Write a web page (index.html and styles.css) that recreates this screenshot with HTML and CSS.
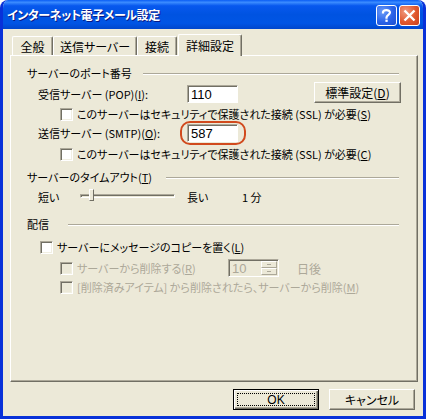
FILE: index.html
```html
<!DOCTYPE html>
<html lang="ja">
<head>
<meta charset="utf-8">
<title>インターネット電子メール設定</title>
<link rel="stylesheet" href="styles.css">
</head>
<body>
<div class="window">
  <div class="titlebar">
    <div class="title">インターネット電子メール設定</div>
    <div class="tbtns">
      <div class="tbtn help">
        <svg width="21" height="21" viewBox="0 0 21 21"><path d="M7 7.5 C7 4.5 14 4.2 14 7.6 C14 9.8 10.5 10 10.5 12.6" fill="none" stroke="#fff" stroke-width="2.2" stroke-linecap="square"/><rect x="9.4" y="14.6" width="2.3" height="2.3" fill="#fff"/></svg>
      </div>
      <div class="tbtn close">
        <svg width="21" height="21" viewBox="0 0 21 21"><path d="M5.5 5.5 L15.5 15.5 M15.5 5.5 L5.5 15.5" stroke="#fff" stroke-width="2.4"/></svg>
      </div>
    </div>
  </div>
  <div class="client">
    <div class="tabs">
      <div class="tab t1">全般</div>
      <div class="tab t2">送信サーバー</div>
      <div class="tab t3">接続</div>
      <div class="tab sel">詳細設定</div>
    </div>
    <div class="panel">
      <div class="ghead g1"><span class="gt">サーバーのポート番号</span><i class="etch"></i></div>
      <div class="row field r-pop">
        <span class="lbl">受信サーバー (POP)(<u>I</u>):</span>
        <span class="inp">110</span>
        <span class="btn std">標準設定(<u>D</u>)</span>
      </div>
      <div class="row chk r-c1"><span class="box"></span><span>このサーバーはセキュリティで保護された接続 (SSL) が必要(<u>S</u>)</span></div>
      <div class="row field r-smtp">
        <span class="lbl">送信サーバー (SMTP)(<u>O</u>):</span>
        <span class="inpwrap"><span class="inp">587</span><span class="mark"></span></span>
      </div>
      <div class="row chk r-c2"><span class="box"></span><span>このサーバーはセキュリティで保護された接続 (SSL) が必要(<u>C</u>)</span></div>

      <div class="ghead g2"><span class="gt">サーバーのタイムアウト(<u>T</u>)</span><i class="etch"></i></div>
      <div class="row slider">
        <span class="s-lbl">短い</span>
        <span class="track"><span class="thumb"></span></span>
        <span class="s-long">長い</span>
        <span class="s-val">1 分</span>
      </div>

      <div class="ghead g3"><span class="gt">配信</span><i class="etch"></i></div>
      <div class="row chk r-c3"><span class="box"></span><span>サーバーにメッセージのコピーを置く(<u>L</u>)</span></div>
      <div class="row chk dis r-c4">
        <span class="box"></span><span class="c4l">サーバーから削除する(<u>R</u>)</span>
        <span class="spin"><span class="spinv">10</span><span class="spinb"><i></i><i></i></span></span>
        <span class="days">日後</span>
      </div>
      <div class="row chk dis r-c5"><span class="box"></span><span>[削除済みアイテム] から削除されたら、サーバーから削除(<u>M</u>)</span></div>
    </div>
    <div class="actions">
      <span class="btn dlg def"><span class="focus">OK</span></span>
      <span class="btn dlg">キャンセル</span>
    </div>
  </div>
</div>
</body>
</html>
```

FILE: styles.css
```css
* { box-sizing: border-box; }
html, body { margin: 0; padding: 0; background: #fff; }
body {
  font-family: "Noto Sans CJK JP", "Noto Sans", sans-serif;
  font-size: 11px;
  color: #000;
  font-feature-settings: "palt";
}
u { text-decoration: underline; text-underline-offset: 1px; }

.window {
  width: 426px;
  height: 419px;
  background: #ECE9D8;
  border-radius: 8px 8px 0 0;
  overflow: hidden;
  display: flex;
  flex-direction: column;
  border-left: 3px solid #0831D9;
  border-right: 3px solid #0831D9;
  border-bottom: 3px solid #0831D9;
}

.titlebar {
  height: 29px;
  margin: 0 -3px;
  padding: 0 6px 0 7px;
  display: flex;
  align-items: center;
  justify-content: space-between;
  background: linear-gradient(to bottom, #0A5DF4 0%, #3B8CFF 8%, #0758EE 20%, #0053E1 50%, #0055E5 80%, #0046CC 100%);
  flex-shrink: 0;
}
.title {
  color: #fff;
  font-weight: bold;
  font-size: 12px;
  letter-spacing: -0.4px;
  text-shadow: 1px 1px 0 #0A1883;
  white-space: nowrap;
  font-feature-settings: "palt";
}
.tbtns { display: flex; gap: 2px; margin-top: 1px; }
.tbtn {
  width: 21px;
  height: 21px;
  border: 1px solid #fff;
  border-radius: 3px;
  display: flex;
  align-items: center;
  justify-content: center;
}
.tbtn svg { margin: -1px; }
.help { background: radial-gradient(circle at 30% 30%, #6C9CF8 0%, #2A63E8 55%, #1D4FD0 100%); }
.close { background: radial-gradient(circle at 30% 30%, #F09A80 0%, #E0582E 55%, #C8401C 100%); }

.client {
  flex: 1;
  display: flex;
  flex-direction: column;
  padding: 5px 5px 0 7px;
}

.tabs {
  display: flex;
  align-items: flex-end;
  height: 21px;
  padding-left: 2px;
  position: relative;
  z-index: 1;
  font-size: 12px;
}
.tab {
  height: 19px;
  border-top: 1px solid #fff;
  border-left: 1px solid #fff;
  border-right: 1px solid #716F64;
  box-shadow: inset -1px 0 0 #ACA899;
  border-radius: 2px 2px 0 0;
  display: flex;
  align-items: center;
  justify-content: center;
  padding-top: 1px;
}
.t1 { width: 41px; }
.t2 { width: 84px; }
.t3 { width: 40px; }
.tab.sel {
  width: 64px;
  height: 22px;
  margin-left: 1px;
  margin-bottom: -1px;
  background: #ECE9D8;
  padding-bottom: 1px;
}

.panel {
  height: 327px;
  border-top: 1px solid #fff;
  border-left: 1px solid #fff;
  border-right: 1px solid #716F64;
  border-bottom: 1px solid #716F64;
  box-shadow: inset -1px -1px 0 #ACA899;
  padding: 10px 18px 0 16px;
  display: flex;
  flex-direction: column;
}

.ghead {
  height: 14px;
  display: flex;
  align-items: center;
  white-space: nowrap;
}
.g1 .gt { width: 116px; }
.g2 .gt { width: 139px; }
.g3 .gt { width: 41px; }
.etch {
  flex: 1;
  height: 2px;
  border-top: 1px solid #ACA899;
  border-bottom: 1px solid #fff;
  margin-top: 1px;
}
.g2 { margin-top: 9px; }
.g3 { margin-top: 12px; }

.row { display: flex; align-items: center; white-space: nowrap; }
.field { height: 18px; padding-left: 11px; }
.lbl { width: 149px; }
.r-pop { margin-top: 5px; }
.r-smtp { margin-top: 3px; }

.inp {
  width: 51px;
  height: 18px;
  background: #fff;
  border-top: 1px solid #ACA899;
  border-left: 1px solid #ACA899;
  border-right: 1px solid #fff;
  border-bottom: 1px solid #fff;
  box-shadow: inset 1px 1px 0 #716F64;
  padding: 0 3px;
  display: flex;
  align-items: center;
  line-height: 1;
  font-family: "Liberation Sans", sans-serif;
  font-size: 13px;
}
.inpwrap { position: relative; display: flex; }
.mark {
  position: absolute;
  left: -7px;
  top: -3px;
  width: 66px;
  height: 24px;
  border: 2px solid #D14A1E;
  border-radius: 10px;
}

.btn {
  display: flex;
  align-items: center;
  justify-content: center;
  background: #ECE9D8;
  border-top: 1px solid #fff;
  border-left: 1px solid #fff;
  border-right: 1px solid #716F64;
  border-bottom: 1px solid #716F64;
  box-shadow: inset -1px -1px 0 #ACA899;
}
.std {
  margin-left: auto;
  margin-right: -2px;
  width: 87px;
  height: 21px;
  margin-top: -3px;
  font-size: 12px;
}

.chk { height: 14px; padding-left: 33px; }
.box {
  width: 13px;
  height: 13px;
  flex-shrink: 0;
  margin-right: 4px;
  background: #fff;
  border-top: 1px solid #ACA899;
  border-left: 1px solid #ACA899;
  border-right: 1px solid #fff;
  border-bottom: 1px solid #fff;
  box-shadow: inset 1px 1px 0 #716F64, inset -1px -1px 0 #F1EFE2;
}
.r-c1 { margin-top: 4px; }
.r-c2 { margin-top: 5px; }
.r-c3 { margin-top: 9px; padding-left: 13px; }
.r-c4 { margin-top: 5px; height: 18px; }
.r-c5 { margin-top: 3px; }
.dis { color: #ACA899; }
.dis .box { background: #ECE9D8; }

.c4l { width: 151px; }
.spin {
  width: 51px;
  height: 18px;
  display: flex;
  align-items: center;
  justify-content: space-between;
  border-top: 1px solid #ACA899;
  border-left: 1px solid #ACA899;
  border-right: 1px solid #fff;
  border-bottom: 1px solid #fff;
  box-shadow: inset 1px 1px 0 #716F64;
  padding: 1px 1px 1px 3px;
  font-family: "Liberation Sans", sans-serif;
  font-size: 13px;
  line-height: 1;
}
.spinb {
  width: 16px;
  height: 14px;
  display: flex;
  flex-direction: column;
}
.spinb i {
  flex: 1;
  border-top: 1px solid #fff;
  border-left: 1px solid #fff;
  border-right: 1px solid #ACA899;
  border-bottom: 1px solid #ACA899;
  position: relative;
}
.spinb i::after {
  content: "";
  position: absolute;
  left: 5px;
  top: 2px;
  width: 4px;
  height: 1px;
  background: #ACA899;
}
.days { margin-left: 18px; font-size: 12px; }

.slider { height: 16px; padding-left: 11px; margin-top: 5px; }
.s-lbl { width: 42px; }
.track {
  width: 95px;
  height: 4px;
  border-top: 1px solid #ACA899;
  border-left: 1px solid #ACA899;
  border-right: 1px solid #fff;
  border-bottom: 1px solid #fff;
  box-shadow: inset 1px 1px 0 #716F64;
  position: relative;
  margin-top: -2px;
}
.thumb {
  position: absolute;
  left: 8px;
  top: -6px;
  width: 5px;
  height: 12px;
  background: #ECE9D8;
  border-top: 1px solid #fff;
  border-left: 1px solid #fff;
  border-right: 1px solid #716F64;
  border-bottom: 1px solid #716F64;
}
.s-long { margin-left: 12px; width: 55px; }

.actions {
  display: flex;
  justify-content: flex-end;
  gap: 10px;
  padding: 7px 3px 0 0;
}
.dlg { width: 86px; height: 21px; font-size: 12px; }
.def {
  border: 1px solid #000;
  box-shadow: inset 1px 1px 0 #fff, inset -1px -1px 0 #716F64, inset -2px -2px 0 #ACA899;
  padding: 3px;
}
.focus {
  width: 100%;
  height: 100%;
  border: 1px dotted #000;
  display: flex;
  align-items: center;
  justify-content: center;
  font-family: "Liberation Sans", sans-serif;
}
```
